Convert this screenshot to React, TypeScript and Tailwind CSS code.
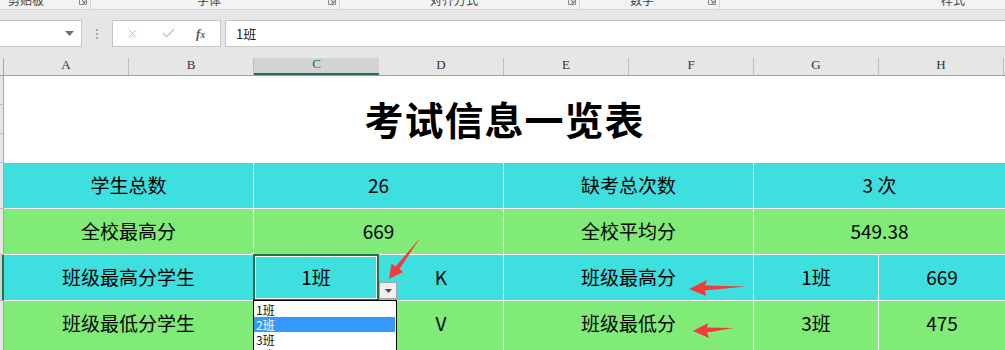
import { X, Check } from 'lucide-react';

const Launcher = () => (
  <svg width="8" height="8" viewBox="0 0 8 8" className="absolute right-[3px] top-[-3px]">
    <path d="M0.5 0.5 H7.5 V7.5 H0.5 Z" fill="none" stroke="#8a8a8a" />
    <path d="M3 3 L6 6 M6 3.5 V6 H3.5" fill="none" stroke="#6a6a6a" />
  </svg>
);

function Ribbon() {
  return (
    <div className="h-[10px] bg-[#f3f3f3] border-b border-[#d5d5d5] flex overflow-hidden text-[12px] text-[#444] leading-none">
      <div className="relative w-[91px] pl-[8px] border-r border-[#d5d5d5]">
        <span className="block -mt-[6px]">剪贴板</span>
        <Launcher />
      </div>
      <div className="relative w-[249px] pl-[106px] border-r border-[#d5d5d5]">
        <span className="block -mt-[6px]">字体</span>
        <Launcher />
      </div>
      <div className="relative w-[240px] pl-[90px] border-r border-[#d5d5d5]">
        <span className="block -mt-[6px]">对齐方式</span>
        <Launcher />
      </div>
      <div className="relative w-[140px] pl-[50px] border-r border-[#d5d5d5]">
        <span className="block -mt-[6px]">数字</span>
        <Launcher />
      </div>
      <div className="relative flex-1 pl-[221px]">
        <span className="block -mt-[6px]">样式</span>
      </div>
    </div>
  );
}

function FormulaBar() {
  return (
    <div className="h-[48px] pt-[10px] flex items-start">
      <div className="w-[82px] h-[27px] bg-white border border-l-0 border-[#c6c6c6] flex items-center justify-end pr-[7px]">
        <svg width="9" height="5" viewBox="0 0 9 5">
          <path d="M0 0 H9 L4.5 5 Z" fill="#6f6f6f" />
        </svg>
      </div>
      <div className="w-[30px] h-[27px] flex flex-col items-center justify-center gap-[2px]">
        <span className="w-[2px] h-[2px] bg-[#a9a9a9]" />
        <span className="w-[2px] h-[2px] bg-[#a9a9a9]" />
        <span className="w-[2px] h-[2px] bg-[#a9a9a9]" />
      </div>
      <div className="w-[109px] h-[27px] bg-white border border-[#c6c6c6] flex items-center">
        <X size={15} strokeWidth={1.6} className="ml-[12px] text-[#bdbdbd]" />
        <Check size={15} strokeWidth={2} className="ml-[21px] text-[#bdbdbd]" />
        <span className="ml-[20px] italic font-bold text-[13px] text-[#5a5a5a] font-['Liberation_Serif',serif]">
          f<span className="text-[10px]">x</span>
        </span>
      </div>
      <div className="flex-1 ml-[4px] h-[27px] bg-white border border-r-0 border-[#c6c6c6] flex items-center pl-[10px] text-[13px] text-[#222]">
        1班
      </div>
    </div>
  );
}

function ColumnHeaders() {
  return (
    <div className="h-[18px] flex border-b border-[#9f9f9f] text-[13px] text-[#333] font-['Liberation_Serif',serif]">
      <div className="w-[4px] border-r border-[#a8a8a8]" />
      <div className="w-[125px] border-r border-[#bdbdbd] flex items-end justify-center pb-[1px]">A</div>
      <div className="w-[125px] border-r border-[#bdbdbd] flex items-end justify-center pb-[1px]">B</div>
      <div className="w-[125px] bg-[#d3d3d3] border-b-2 border-[#217346] flex items-end justify-center text-[#217346]">C</div>
      <div className="w-[125px] border-r border-[#bdbdbd] flex items-end justify-center pb-[1px]">D</div>
      <div className="w-[125px] border-r border-[#bdbdbd] flex items-end justify-center pb-[1px]">E</div>
      <div className="w-[125px] border-r border-[#bdbdbd] flex items-end justify-center pb-[1px]">F</div>
      <div className="w-[125px] border-r border-[#bdbdbd] flex items-end justify-center pb-[1px]">G</div>
      <div className="w-[125px] border-r border-[#bdbdbd] flex items-end justify-center pb-[1px]">H</div>
    </div>
  );
}

const cyan = 'bg-[#3ddfdf]';
const green = 'bg-[#80ec77]';

function Stub({ active = false }: { active?: boolean }) {
  return active ? (
    <div className="w-[4px] bg-[#d3d3d3] border-r-2 border-b border-r-[#217346] border-b-[#bdbdbd]" />
  ) : (
    <div className="w-[4px] bg-[#e6e6e6] border-r border-b border-r-[#a8a8a8] border-b-[#bdbdbd]" />
  );
}

function Sheet() {
  return (
    <div className="flex flex-col bg-white text-[19px] text-black">
      <div className="flex h-[87px]">
        <div className="w-[4px] flex flex-col">
          <div className="h-[29px] bg-[#e6e6e6] border-r border-b border-r-[#a8a8a8] border-b-[#bdbdbd]" />
          <div className="h-[29px] bg-[#e6e6e6] border-r border-b border-r-[#a8a8a8] border-b-[#bdbdbd]" />
          <div className="h-[29px] bg-[#e6e6e6] border-r border-b border-r-[#a8a8a8] border-b-[#bdbdbd]" />
        </div>
        <div className="flex-1 flex items-center justify-center pb-[2px] text-[39px] font-bold tracking-[1px]">
          考试信息一览表
        </div>
      </div>

      <div className="flex h-[46px]">
        <Stub />
        <div className={`w-[250px] ${cyan} border-r border-b border-white flex items-center justify-center`}>学生总数</div>
        <div className={`w-[250px] ${cyan} border-r border-b border-white flex items-center justify-center`}>26</div>
        <div className={`w-[250px] ${cyan} border-r border-b border-white flex items-center justify-center`}>缺考总次数</div>
        <div className={`w-[251px] ${cyan} border-b border-white flex items-center justify-center`}>3&nbsp;次</div>
      </div>

      <div className="flex h-[46px]">
        <Stub />
        <div className={`w-[250px] ${green} border-r border-b border-white flex items-center justify-center`}>全校最高分</div>
        <div className={`w-[250px] ${green} border-r border-b border-white flex items-center justify-center`}>669</div>
        <div className={`w-[250px] ${green} border-r border-b border-white flex items-center justify-center`}>全校平均分</div>
        <div className={`w-[251px] ${green} border-b border-white flex items-center justify-center`}>549.38</div>
      </div>

      <div className="flex h-[46px]">
        <Stub active />
        <div className={`w-[250px] ${cyan} border-r border-b border-white flex items-center justify-center`}>班级最高分学生</div>
        <div className={`relative w-[125px] ${cyan} border-r border-b border-white flex items-center justify-center`}>
          1班
          <div className="absolute -left-[1px] -top-[1px] -right-[1px] -bottom-[1px] border-2 border-[#217346] shadow-[inset_0_0_0_1px_white]" />
        </div>
        <div className={`w-[125px] ${cyan} border-r border-b border-white flex items-center justify-center`}>K</div>
        <div className={`w-[250px] ${cyan} border-r border-b border-white flex items-center justify-center`}>班级最高分</div>
        <div className={`w-[125px] ${cyan} border-r border-b border-white flex items-center justify-center`}>1班</div>
        <div className={`w-[126px] ${cyan} border-b border-white flex items-center justify-center`}>669</div>
      </div>

      <div className="flex h-[50px]">
        <Stub />
        <div className={`w-[250px] ${green} border-r border-white flex items-center justify-center pb-[6px]`}>班级最低分学生</div>
        <div className={`w-[125px] ${green} border-r border-white`} />
        <div className={`w-[125px] ${green} border-r border-white flex items-center justify-center pb-[6px]`}>V</div>
        <div className={`w-[250px] ${green} border-r border-white flex items-center justify-center pb-[6px]`}>班级最低分</div>
        <div className={`w-[125px] ${green} border-r border-white flex items-center justify-center pb-[6px]`}>3班</div>
        <div className={`w-[126px] ${green} flex items-center justify-center pb-[6px]`}>475</div>
      </div>
    </div>
  );
}

function Overlays() {
  return (
    <>
      <div className="absolute left-[379px] top-[282px] w-[18px] h-[17px] bg-[#f0f0f0] border border-[#a5a5a5] flex items-center justify-center">
        <svg width="7" height="4" viewBox="0 0 7 4">
          <path d="M0 0 H7 L3.5 4 Z" fill="#4a4a4a" />
        </svg>
      </div>
      <div className="absolute left-[253px] top-[300px] w-[144px] h-[60px] bg-white border border-black pt-[1px] text-[12px] leading-[15px] text-[#111]">
        <div className="h-[15px] px-[2px]">1班</div>
        <div className="h-[15px] px-[2px] mr-[1px] bg-[#3399ff] text-white">2班</div>
        <div className="h-[15px] px-[2px]">3班</div>
        <div className="h-[15px] px-[2px]">4班</div>
      </div>
      <svg className="absolute left-0 top-0 pointer-events-none" width="1005" height="350" viewBox="0 0 1005 350">
        <polygon points="389,279 403,272 399.5,269 420,238 395.5,266.5 391.5,263.5" fill="#f23c3c" />
        <polygon points="689,289 707,280 705,285.5 746,286.5 705,290.5 706,296" fill="#f23c3c" />
        <polygon points="693,331 708,323 707,327.5 734,328 707,332.5 709,338" fill="#f23c3c" />
      </svg>
    </>
  );
}

export default function App() {
  return (
    <div className="relative w-[1005px] h-[350px] overflow-hidden bg-[#e6e6e6] font-['Noto_Sans_CJK_SC','Noto_Sans',sans-serif]">
      <Ribbon />
      <FormulaBar />
      <ColumnHeaders />
      <Sheet />
      <Overlays />
    </div>
  );
}
